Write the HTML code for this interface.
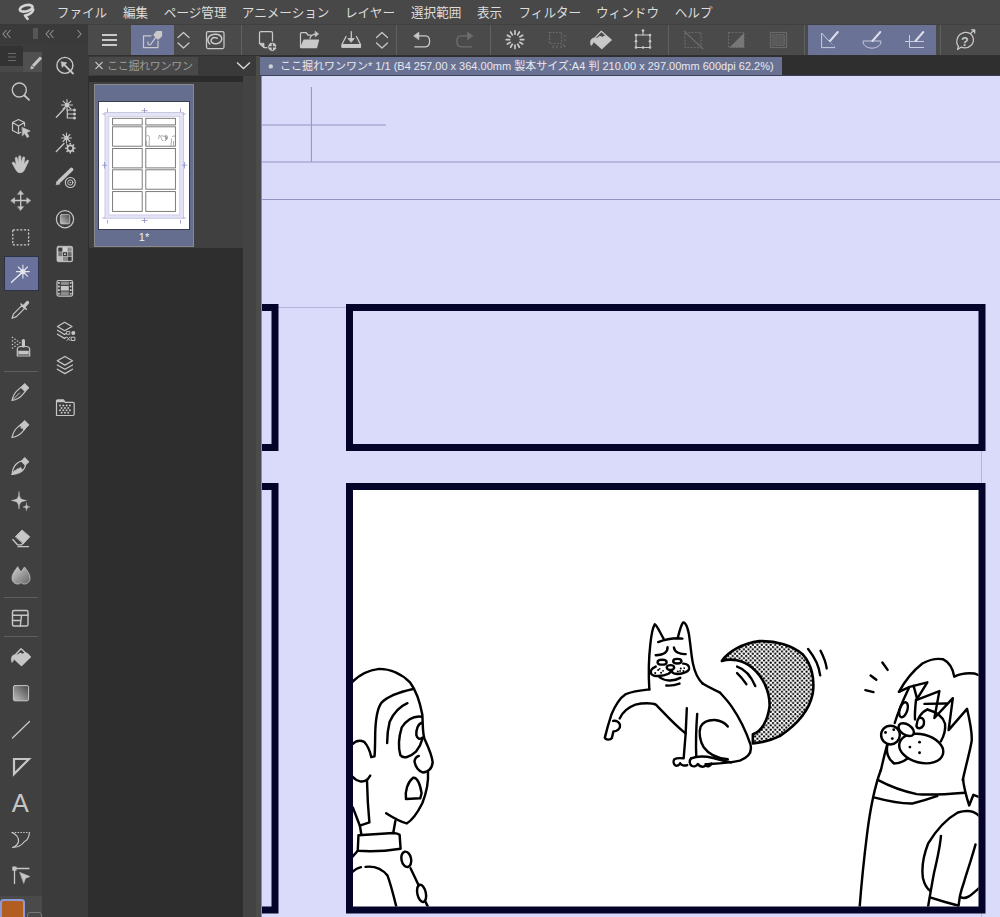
<!DOCTYPE html>
<html lang="ja">
<head>
<meta charset="utf-8">
<title>CLIP STUDIO PAINT</title>
<style>
html,body{margin:0;padding:0;}
body{width:1000px;height:917px;overflow:hidden;background:#404040;position:relative;
 font-family:"Liberation Sans","Noto Sans CJK JP",sans-serif;color:#d6d6d6;}
.abs{position:absolute;}
#menubar{left:0;top:0;width:1000px;height:24px;background:#484848;}
#menubar span{position:absolute;top:3.5px;font-size:12.6px;line-height:18px;color:#dcdcdc;white-space:nowrap;}
#tb-left{left:0;top:24px;width:88px;height:32px;background:#3a3a3a;}
#cmdbar{left:88px;top:25px;width:912px;height:30px;background:#4a4a4a;}
#cmdline{left:88px;top:24px;width:912px;height:1px;background:#333;}
#toolcol1{left:0;top:56px;width:42px;height:861px;background:#404040;}
#toolcol2{left:42px;top:44px;width:46px;height:873px;background:#3b3b3b;}
#thumbpanel{left:88px;top:56px;width:155px;height:861px;background:#2e2e2e;}
#scrollcol{left:243px;top:76px;width:13px;height:841px;background:#434343;}
#edgecol{left:256px;top:56px;width:4px;height:861px;background:#4b4b48;}
#edge2{left:260px;top:76px;width:1px;height:841px;background:#47485a;border-right:1px solid #8a8bb0;}
#edge3{left:260px;top:75px;width:740px;height:1px;background:#3c3f55;}
#canvas{left:262px;top:76px;width:738px;height:841px;background:#dadafb;overflow:hidden;}
#doctabrow{left:260px;top:56px;width:744px;height:20px;background:#2f2f2f;}
#doctab{left:260px;top:57px;width:522px;height:18px;background:#6a7293;}
#doctab span{position:absolute;left:20px;top:0;font-size:11px;line-height:18px;color:#e8e8ee;white-space:nowrap;}
.sep{top:25px;width:1px;height:30px;background:#616161;}
</style>
</head>
<body>
<div id="menubar" class="abs">
 <span style="left:56.8px">ファイル</span>
 <span style="left:123px">編集</span>
 <span style="left:163.8px">ページ管理</span>
 <span style="left:241.8px">アニメーション</span>
 <span style="left:345px">レイヤー</span>
 <span style="left:411px">選択範囲</span>
 <span style="left:477px">表示</span>
 <span style="left:518.5px">フィルター</span>
 <span style="left:596px">ウィンドウ</span>
 <span style="left:674.7px">ヘルプ</span>
</div>
<div id="tb-left" class="abs"></div>
<div id="cmdbar" class="abs"></div>
<div id="toolcol1" class="abs"></div>
<div id="toolcol2" class="abs"></div>
<div id="thumbpanel" class="abs"></div>
<div id="scrollcol" class="abs"></div>
<div id="edgecol" class="abs"></div><div id="edge2" class="abs"></div>
<div id="doctabrow" class="abs"></div>
<div id="edge3" class="abs"></div>
<div id="doctab" class="abs"><span>ここ掘れワンワン* 1/1 (B4 257.00 x 364.00mm 製本サイズ:A4 判 210.00 x 297.00mm 600dpi 62.2%)</span></div>
<!--UIBG-->
<!-- top-left toolbar bits -->
<div class="abs" style="left:33px;top:28px;width:5px;height:11px;background:#565656"></div>
<!-- command bar selected / separators -->
<div class="abs" style="left:131px;top:25px;width:43px;height:30px;background:#6a7296"></div>
<div class="abs" style="left:808px;top:25px;width:128px;height:30px;background:#6a7296"></div>
<div class="abs sep" style="left:241px"></div><div class="abs sep" style="left:396px"></div>
<div class="abs sep" style="left:490px"></div><div class="abs sep" style="left:668px"></div>
<div class="abs sep" style="left:804px"></div><div class="abs sep" style="left:940px"></div>
<div class="abs" style="left:88px;top:55px;width:912px;height:1px;background:#303030"></div>
<!-- tool palette tabs -->
<div class="abs" style="left:0;top:44px;width:42px;height:28px;background:#3c3c3c"></div>
<div class="abs" style="left:0;top:46px;width:23px;height:20px;background:#333"></div>
<div class="abs" style="left:0;top:66px;width:23px;height:6px;background:#494949"></div>
<div class="abs" style="left:23px;top:52px;width:19px;height:20px;background:#505050"></div>
<!-- selected tool -->
<div class="abs" style="left:4px;top:256px;width:33px;height:33px;background:#69719a;border:1px solid #2e3248"></div>
<div class="abs" style="left:4px;top:371px;width:34px;height:1px;background:#5e5e5e"></div>
<div class="abs" style="left:4px;top:597px;width:34px;height:1px;background:#5e5e5e"></div>
<div class="abs" style="left:4px;top:636px;width:34px;height:1px;background:#5e5e5e"></div>
<!-- color swatches -->
<div class="abs" style="left:0;top:896px;width:42px;height:21px;background:#4a4a4a"></div>
<div class="abs" style="left:27px;top:912px;width:13px;height:10px;border:1px solid #777;border-radius:3px;background:#484848"></div>
<div class="abs" style="left:0px;top:899px;width:21px;height:22px;border:2.5px solid #8d9ad6;border-radius:3.5px;background:#b25e22"></div>
<!-- thumbnail panel -->
<div class="abs" style="left:88px;top:56px;width:168px;height:20px;background:#3a3a3a"></div>
<div class="abs" style="left:89px;top:57px;width:109px;height:18px;background:#494949"></div>
<div class="abs" style="left:107px;top:57px;font-size:11px;line-height:18px;color:#9c9c9c;white-space:nowrap;letter-spacing:-0.3px">ここ掘れワンワン</div>
<div class="abs" style="left:89px;top:76px;width:154px;height:6px;background:#2b2b2b"></div>
<div class="abs" style="left:89px;top:82px;width:154px;height:166px;background:#404040"></div>
<div class="abs" style="left:94px;top:84px;width:98px;height:161px;background:#666e8f;border:1px solid #8a8a8a"></div>
<div class="abs" style="left:98px;top:101px;width:90px;height:127px;background:#fff;border:1px solid #3a3c4e"></div>
<div class="abs" style="left:95px;top:230px;width:98px;text-align:center;font-size:11px;line-height:14px;color:#f0f0f0">1*</div>
<!--/UIBG-->
<div id="canvas" class="abs">
</div>
<svg class="abs" style="left:0;top:0" width="1000" height="917" viewBox="0 0 1000 917">
<defs>
<clipPath id="cv"><rect x="262" y="76" width="738" height="841"/></clipPath>
<clipPath id="p4"><rect x="353" y="490" width="625.5" height="416.5"/></clipPath>
<pattern id="tone" width="4.47" height="4.47" patternUnits="userSpaceOnUse" patternTransform="scale(5.392) translate(0.4,0.2)">
<rect width="4.47" height="4.47" fill="#fff"/>
<circle cx="1.1" cy="1.1" r="1.12" fill="#000"/><circle cx="3.335" cy="3.335" r="1.12" fill="#000"/>
</pattern>
</defs>
<g clip-path="url(#cv)">
<!-- guide lines -->
<g stroke="#9292c3" stroke-width="1" fill="none">
<line x1="311.4" y1="87" x2="311.4" y2="162"/>
<line x1="262" y1="125" x2="386" y2="125"/>
<line x1="262" y1="162" x2="1000" y2="162"/>
<line x1="262" y1="199.5" x2="1000" y2="199.5"/>
<line x1="278" y1="307.5" x2="347" y2="307.5" stroke="#b4b4dc"/>
<line x1="981.5" y1="451" x2="981.5" y2="483" stroke="#b4b4dc"/>
<line x1="981.5" y1="913" x2="981.5" y2="917" stroke="#b4b4dc"/>
</g>
<!-- comic panels -->
<g stroke="#04042a" stroke-width="7" fill="none">
<rect x="200" y="307.5" width="75" height="140"/>
<rect x="349.5" y="307.5" width="632.5" height="140"/>
<rect x="200" y="486.5" width="75" height="423.5"/>
<rect x="349.5" y="486.5" width="632.5" height="423.5" fill="#fff"/>
</g>
<g clip-path="url(#p4)" fill="none" stroke="#000" stroke-width="1.7" stroke-linecap="round" stroke-linejoin="round">
<!--DRAWINGS-->
<!--DOGMAN-->
<!-- right character: zoom coords origin (860,650) scale 7.054 -->
<g transform="translate(860,650) scale(0.14176)" stroke-width="17.2">
<path d="M158 88 L195 140"/><path d="M75 180 L115 210"/><path d="M38 283 L95 297"/>
<path d="M275 295 C310 230 370 150 440 95 C490 68 545 58 585 65 C625 85 655 130 665 188 C700 170 760 160 810 166 L850 182"/>
<path d="M275 295 L350 260 L475 228 L403 345 L378 252"/>
<path d="M345 268 C320 320 280 400 245 515"/>
<path d="M405 350 L560 290 L525 480 L655 340 L625 565 L755 415 C775 500 792 580 788 640 C775 720 745 820 725 917"/>
<path d="M455 380 L610 378"/>
<ellipse cx="306" cy="422" rx="27" ry="55" transform="rotate(18 307 425)"/>
<path d="M395 350 C390 400 385 450 388 490"/>
<path d="M475 420 C435 435 400 485 398 535 C405 560 435 558 450 525 C458 495 440 470 415 480"/>
<path d="M475 420 C530 435 585 468 600 520 C605 570 585 620 570 645"/>
<path d="M195 665 C180 720 200 775 240 800 C280 800 310 785 335 765"/>
<ellipse cx="432" cy="695" rx="158" ry="100" transform="rotate(14 432 695)" fill="#fff"/>
<circle cx="215" cy="600" r="66" fill="#fff"/>
<ellipse cx="326" cy="562" rx="60" ry="37" transform="rotate(33 326 562)" fill="#fff"/>
<g fill="#000" stroke="none">
<circle cx="180" cy="582" r="10"/><circle cx="238" cy="562" r="10"/><circle cx="228" cy="625" r="10"/>
<circle cx="420" cy="650" r="10"/><circle cx="352" cy="685" r="10"/><circle cx="420" cy="725" r="10"/>
</g>
<!-- lower part: origin (860,770): y + 846.5 -->
<path d="M192 668 C172 740 158 800 147 850"/>
<g transform="translate(0,846.5)">
<path d="M147 0 C110 100 75 250 50 450 C25 650 8 820 -5 1000"/>
<path d="M125 70 C200 110 300 150 400 170 C500 180 600 172 740 160"/>
<path d="M105 195 C180 215 280 238 370 236 C450 218 500 200 545 184"/>
<path d="M727 62 C730 100 745 170 770 250 L800 175 L850 195"/>
<path d="M850 335 C815 290 760 278 690 300 C610 345 540 420 480 520 C445 610 432 680 444 762 C455 810 475 840 497 853"/>
<path d="M571 465 C565 540 545 630 522 727 C510 790 498 860 480 966"/>
<path d="M494 899 L600 931 L691 956"/>
<path d="M815 525 C800 580 785 625 776 656 C760 705 745 750 734 790 C720 830 710 865 705 889 L695 959"/>
<path d="M712 899 C730 905 748 903 765 893 C790 878 815 855 845 828"/>
</g>
</g>
<!--/DOGMAN-->
<!--MAN-->
<!-- old man: zoom coords origin (345,655) scale 7.05 -->
<g transform="translate(345,655) scale(0.14184)" stroke-width="17.2">
<path d="M50 192 C100 140 160 108 240 98 C320 98 400 135 460 195 C505 255 530 340 545 420 C550 480 545 540 560 590 C585 645 612 700 618 755 C615 800 585 828 548 828 C515 815 495 785 490 748 C495 725 505 715 520 712"/>
<path d="M480 240 C400 258 305 288 258 335 C228 375 216 440 213 550 C212 650 210 700 208 715 L185 720 C178 685 160 640 135 612 C105 598 75 605 50 630"/>
<path d="M440 340 C390 362 345 405 315 470 C300 530 297 580 297 620"/>
<path d="M540 435 C490 428 440 452 400 510 C380 575 375 650 390 705 C410 735 460 720 500 682 C525 650 540 615 546 590"/>
<path d="M542 478 C515 485 500 525 503 565 C510 590 528 598 545 582"/>
<!-- lower part: origin (345,765): y + 775.5 -->
<g transform="translate(0,775.5)">
<path d="M50 80 C85 120 130 128 160 100 L178 75"/>
<path d="M155 108 C157 200 162 300 172 405 L105 428 C90 390 75 350 55 300"/>
<path d="M105 428 L115 488"/>
<path d="M585 50 C590 120 572 200 545 270 C510 340 470 392 435 412 C400 402 340 372 290 340"/>
<path d="M430 240 C422 180 442 120 480 90 C510 85 530 135 540 200 L530 235 Z"/>
<path d="M355 395 L340 480"/>
<path d="M95 495 L340 480 C360 482 375 485 385 492 L392 590 C300 605 180 612 90 605 Z"/>
<path d="M90 605 L50 650"/>
<ellipse cx="432" cy="665" rx="34" ry="55" transform="rotate(-12 432 665)"/>
<path d="M462 728 L520 850"/>
<ellipse cx="540" cy="905" rx="30" ry="62" transform="rotate(-12 540 905)"/>
<path d="M565 960 L585 1000"/>
<path d="M50 755 C70 735 90 725 112 720"/>
<path d="M145 718 C200 712 260 730 300 780 C325 850 345 930 362 1000"/>
</g>
</g>
<!--/MAN-->
<!--CAT-->
<!-- dog/cat left half: zoom coords origin (590,610) scale 5.392 -->
<g transform="translate(590,610) scale(0.18546)" stroke-width="13">
<!-- tail (coords from origin 700 -> shift +593.1) -->
<g transform="translate(593.1,0)">
<path d="M118 275 C150 225 230 180 320 168 C410 165 500 190 555 240 C600 290 620 370 608 450 C590 540 520 620 430 680 C380 705 330 715 285 720 L285 670 C330 655 365 600 375 520 C378 440 340 360 280 310 C230 270 165 258 118 275 Z" fill="url(#tone)" stroke-width="14"/>
<path d="M200 305 C240 318 275 355 298 410"/>
<path d="M200 340 C222 360 240 385 250 400"/>
<path d="M583 210 C615 250 642 300 648 352"/>
<path d="M650 220 C668 255 680 290 683 315"/>
<!-- back line and rump -->
<path d="M108 446 C130 470 150 490 170 520 C215 585 250 660 272 725 C282 765 262 795 215 812 C160 825 90 828 30 832"/>
<!-- haunch -->
<path d="M150 628 C135 608 110 596 80 593 C45 592 15 605 3 630 C-8 660 0 710 20 740 C45 775 95 800 150 805"/>
</g>
<!-- head+face: zoom coords origin (640,615) scale 10.18 -->
<g transform="translate(269.6,26.96) scale(0.5297)" stroke-width="24.5">
<path d="M95 758 C85 600 88 450 105 300 C112 230 128 130 150 95 C175 110 210 190 240 240"/>
<path d="M185 275 C250 250 330 236 385 236 L432 240"/>
<path d="M385 232 C400 170 420 100 440 75 C462 70 485 130 497 190 C512 280 520 400 538 490 C552 560 575 640 640 700"/>
<path d="M280 328 C284 372 250 405 160 410"/>
<path d="M345 330 C350 375 400 402 465 398"/>
<ellipse cx="225" cy="480" rx="46" ry="25"/>
<ellipse cx="380" cy="470" rx="42" ry="23"/>
<ellipse cx="310" cy="535" rx="38" ry="25"/>
<path d="M160 525 C120 540 100 570 115 600 C140 630 230 628 290 598 C305 588 315 578 320 565"/>
<path d="M440 495 C480 495 505 520 500 548 C490 585 400 610 345 595 C330 588 322 578 320 565"/>
<path d="M200 635 C250 672 340 680 410 640"/>
<path d="M268 718 C320 722 365 712 402 698"/>
<g fill="#000" stroke="none">
<circle cx="155" cy="590" r="10.5"/><circle cx="185" cy="560" r="10.5"/><circle cx="215" cy="588" r="10.5"/><circle cx="200" cy="548" r="9"/><circle cx="235" cy="568" r="9"/>
<circle cx="385" cy="575" r="10.5"/><circle cx="415" cy="545" r="10.5"/><circle cx="442" cy="570" r="10.5"/><circle cx="408" cy="570" r="9"/><circle cx="450" cy="540" r="9"/>
</g>
</g>
<path d="M606 395 C630 411 665 428 702 446"/>
<!-- arm -->
<path d="M320 428 C280 432 230 438 190 455 C160 475 135 515 115 565 C100 610 88 655 80 688 C85 702 110 702 118 690 C122 675 124 662 126 655 C145 655 165 640 162 620 C158 603 140 594 125 598"/>
<path d="M160 585 C175 550 205 525 245 510 C285 500 335 500 355 510 C400 555 450 615 515 665"/>
<!-- front legs -->
<path d="M522 530 C520 600 515 700 505 800 C485 798 465 798 455 805 C448 815 450 830 460 838 C470 842 482 838 486 826 C492 838 510 842 524 836"/>
<path d="M578 560 C572 640 570 720 573 790"/>
<path d="M545 800 C535 812 535 830 548 840 C560 846 575 842 582 830 C590 845 610 850 625 838 C632 846 648 846 655 828"/>
<path d="M545 800 C575 788 620 788 665 798 C700 808 730 815 760 822"/>
</g>
<!--/CAT-->
</g>
</g>
</svg>

<!--ICO-->
<svg class="abs" style="left:0;top:0" width="1000" height="917" viewBox="0 0 1000 917">
<defs>
<linearGradient id="gsq" x1="1" y1="0" x2="0" y2="1"><stop offset="0" stop-color="#484848"/><stop offset="1" stop-color="#c4c4c4"/></linearGradient>
<linearGradient id="gsq2" x1="1" y1="0" x2="0" y2="1"><stop offset="0" stop-color="#454545"/><stop offset="1" stop-color="#c0c0c0"/></linearGradient>
<linearGradient id="gdrop" x1="0" y1="0" x2="1" y2="1"><stop offset="0" stop-color="#d0d0d0"/><stop offset="1" stop-color="#666"/></linearGradient>
</defs>
<!-- app logo -->
<g fill="none" stroke="#d4d4d4" stroke-width="2.7" stroke-linecap="round" stroke-linejoin="round">
<ellipse cx="26.2" cy="8.3" rx="6.5" ry="3.1" transform="rotate(-14 26.2 8.3)"/>
<path d="M33.2 9.5 C32.5 13 28.5 14.8 25 15.5 L27.5 18.8"/>
</g>
<!-- top-left chevrons -->
<g fill="none" stroke="#8e8e8e" stroke-width="1.1">
<path d="M6.5 30 L3 34 L6.5 38 M10.5 30 L7 34 L10.5 38"/>
<path d="M49.5 30 L46 34 L49.5 38 M53.5 30 L50 34 L53.5 38"/>
<path d="M77.5 30 L81 34 L77.5 38"/>
</g>
<!-- ===== command bar ===== -->
<g fill="none" stroke="#c9c9c9" stroke-width="1.25" stroke-linecap="round" stroke-linejoin="round">
<path d="M102 35 H117 M102 40 H117 M102 45 H117" stroke-width="2" stroke-linecap="butt"/>
<!-- shovel -->
<path d="M151 35.8 H143.5 V47.5 H158 V41"/>
<path d="M148 42 C147 45 151 46 151.5 43 L156 37" />
<path d="M154 35 L157 31.5 H161.5 V36 L158 39 Z" fill="#c9c9c9"/>
<!-- chevrons -->
<path d="M178 37.5 L183.5 32.5 L189 37.5 M178 43 L183.5 48 L189 43"/>
<path d="M376.5 37.5 L382 32.5 L387.5 37.5 M376.5 43 L382 48 L387.5 43"/>
<!-- clip studio -->
<rect x="206.5" y="31.5" width="17.5" height="17" rx="1.5"/>
<path d="M209.8 44 C206 40 208 35 214.4 34.2 C218 33.800 221.500 35.200 221.800 38.500 C222 42 218 44.200 215 43.800 C212 43.400 210.300 41.500 211.300 39.500 C212.300 37.600 215 37.300 217.200 38.200" stroke-width="1.500"/>
<!-- new doc -->
<path d="M268 47.5 H264 L259.5 43.5 V33 C259.5 32 260.2 31.5 261 31.5 H271 C272 31.5 272.5 32 272.5 33 V41"/>
<path d="M259.8 43.3 H264 V47.3 Z" fill="#c9c9c9" stroke-width="0.8"/>
<circle cx="272.3" cy="46.8" r="4.6" fill="#c9c9c9" stroke="#4a4a4a" stroke-width="1"/>
<path d="M269.6 46.8 H275 M272.3 44.1 V49.5" stroke="#4a4a4a" stroke-width="1.2"/>
<!-- open folder -->
<path d="M300.5 47 V33.5 C300.5 33 301 32.5 301.5 32.5 H306 L308 35 H311"/>
<path d="M300.8 47.5 L304 40 H318.5 L316.5 47.5 Z" fill="#c9c9c9"/>
<path d="M310 38.5 C310.5 35.5 313 34 316.5 34" />
<path d="M315.5 31.5 L318.5 34 L315.5 36.5 Z" fill="#c9c9c9" stroke-width="0.8"/>
<!-- save tray -->
<path d="M346 36.5 L342 44.5 V47 H360.5 V44.5 L356.5 36.5"/>
<path d="M342.3 44.5 H360.3 V47.2 H342.3 Z" fill="#c9c9c9"/>
<path d="M351.3 31.5 V40"/>
<path d="M348.3 38.5 H354.3 L351.3 42 Z" fill="#c9c9c9" stroke-width="0.8"/>
<!-- undo -->
<path d="M418 35.8 H425.5 C431 36 431 46.5 425.5 46.8 H414.8"/>
<path d="M414 35.8 L418.8 32.3 V39.3 Z" fill="#c9c9c9" stroke-width="0.8"/>
<!-- bucket -->
<path d="M593 40 L601.3 31.3 L611 40"/>
<path d="M594.5 38.5 L598 38 L600 36.5 L602.5 37.5 L605 36 L607.5 37 L611 40 L601.8 48.6 L594.5 42 Z" fill="#c9c9c9"/>
<path d="M593.5 38 C590 39 590 43 591.2 45.5 C593 44 593.8 41.5 594.5 40 Z" fill="#c9c9c9" stroke-width="0.6"/>
<!-- transform -->
<rect x="636" y="35" width="14" height="12.5" stroke-width="1.1"/>
<path d="M643 35 V30.5" stroke-width="1.1"/>
<g fill="#c9c9c9" stroke="none"><circle cx="643" cy="30.6" r="1.3"/><circle cx="636" cy="35" r="1.3"/><circle cx="650" cy="35" r="1.3"/><circle cx="636" cy="47.5" r="1.3"/><circle cx="650" cy="47.5" r="1.3"/><circle cx="636" cy="41.2" r="1.3"/><circle cx="650" cy="41.2" r="1.3"/><circle cx="643" cy="47.5" r="1.3"/></g>
<!-- rulers on selected bg -->
<g stroke="#c9cde0" stroke-width="1" stroke-linecap="butt">
<path d="M821.6 33 V47.6 H835 M821.6 33 L829.500 41.500"/>
<path d="M829.500 41.500 L835 47" stroke-dasharray="1 1.200" stroke-width="0.800"/>
<path d="M863 41 H881 C881 50.500 863 50.500 863 41 Z"/>
<path d="M905 41.500 H924 M909.500 35 V47.500 H924"/>
<g stroke="#dcdfea" stroke-width="2" stroke-linecap="round">
<path d="M830 41 L837.800 32"/><path d="M872.500 41 L880.300 32"/><path d="M915.500 41 L923.300 32"/>
</g>
</g>
<!-- help -->
<path d="M958.5 46.5 C955 42 957 33.5 965 32.3 C973 32 975.5 40 971.5 45 C968.5 48 964 48.3 961 47.2 L957.5 49.5 Z"/>
<path d="M970.5 33.5 L974.5 30 M971.5 29.8 H974.7 V33"/>
</g>
<text x="961" y="45.5" font-family="Liberation Sans, sans-serif" font-weight="bold" font-size="12.5" fill="#c9c9c9">?</text>
<!-- dim command icons -->
<g fill="none" stroke="#6f6f6f" stroke-width="1.25" stroke-linecap="round" stroke-linejoin="round">
<path d="M467.5 35.8 H461 C455.500 36 455.500 46.500 461 46.800 H471.500"/>
<path d="M472.5 35.8 L467.7 32.300 V39.300 Z" fill="#6f6f6f" stroke-width="0.8"/>
</g>
<g fill="none" stroke="#6a6a6a" stroke-width="1.2">
<rect x="549.5" y="32.5" width="12" height="11" stroke-dasharray="2 1.2"/>
<path d="M553 45.500 V48 M557 45.500 V48.500 M561 45.500 V48 M563.5 36 H566 M563.5 40 H566.500 M563 44.500 L565.500 47" stroke-dasharray="none"/>
<rect x="685" y="32.5" width="16" height="15" stroke-dasharray="2 1.3"/>
<path d="M684 31 L703 49" stroke-width="1.4"/>
<rect x="728.5" y="32.5" width="15.5" height="15" stroke-dasharray="2 1.3"/>
<path d="M744 33 V47.500 H729.500 Z" fill="#777" stroke="none"/>
<rect x="770.5" y="32.5" width="16" height="15" />
<rect x="772.5" y="34.5" width="12" height="11" fill="#5a5a5a" stroke-dasharray="2 1.3"/>
</g>
<!-- spinner -->
<g stroke="#c9c9c9" stroke-width="1.7" stroke-linecap="round">
<path id="tk" d="M515 30.8 V34.2"/>
<use href="#tk" transform="rotate(30 515 39.6)"/><use href="#tk" transform="rotate(60 515 39.6)"/><use href="#tk" transform="rotate(90 515 39.6)"/><use href="#tk" transform="rotate(120 515 39.6)"/><use href="#tk" transform="rotate(150 515 39.6)"/><use href="#tk" transform="rotate(180 515 39.6)"/><use href="#tk" transform="rotate(210 515 39.6)"/><use href="#tk" transform="rotate(240 515 39.6)"/><use href="#tk" transform="rotate(270 515 39.6)"/><use href="#tk" transform="rotate(300 515 39.6)"/><use href="#tk" transform="rotate(330 515 39.6)"/>
</g>
<!-- thumbnail tab x / chevron / doc tab dot -->
<path d="M95.500 62 L102.500 69 M102.500 62 L95.500 69" stroke="#bdbdbd" stroke-width="1.2" fill="none"/>
<path d="M237 62.5 L243.500 68.500 L250 62.500" stroke="#d6d6d6" stroke-width="1.4" fill="none"/>
<circle cx="270.8" cy="66.4" r="2.2" fill="#cfcfd8"/>
<!--TOOLICONS-->
<g fill="none" stroke="#c6c6c6" stroke-width="1.4" stroke-linecap="round" stroke-linejoin="round">
<!-- tab icons -->
<path d="M8.5 53.5 H15.5 M8.5 57 H15.5 M8.5 60.5 H15.5" stroke="#6c6c6c" stroke-width="1.2"/>
<path d="M33 66 L41 57.500" stroke-width="3" stroke-linecap="butt"/>
<path d="M30.8 68.6 L31.5 66 L33.500 67.800 Z" fill="#c6c6c6" stroke-width="0.8"/>
<!-- magnifier -->
<circle cx="19.3" cy="90" r="7"/><path d="M24.500 95.500 L29 99.800" stroke-width="1.8"/>
<!-- cube + cursor -->
<path d="M12.500 122.500 L18.500 119.500 L24.500 122.500 V126 M12.500 122.500 V130.500 L18.500 133.500 V126 L12.500 122.500 M18.500 126 L24.500 122.500 M18.5 133.500 L20.500 132.500" stroke-width="1.2"/>
<path d="M22.300 127.500 L30.200 131 L26.800 132.500 L29 136.500 L27 137.500 L24.800 133.500 L22.500 135.800 Z" fill="#c6c6c6" stroke-width="0.6"/>
<!-- hand -->
<path d="M15 168 L12.300 163.500 C12 162 13.500 161.500 14.500 162.800 L16.300 165 L15.300 158.500 C15.200 157 16.900 156.800 17.300 158.200 L18.600 163 L18.800 156.700 C18.900 155.300 20.700 155.300 20.800 156.700 L21.200 163 L22.800 157.600 C23.300 156.300 24.900 156.800 24.700 158.200 L23.800 164 L26.800 160.500 C27.800 159.500 29 160.500 28.300 161.700 L25.300 168 C24 171.500 22.500 172.700 20 172.700 C17.500 172.700 16.200 171 15 168 Z" fill="#c6c6c6" stroke-width="0.7"/>
<!-- move -->
<path d="M20.700 192.500 V208.500 M12.700 200.500 H28.700" stroke-width="1.3"/>
<path d="M20.700 190.700 L23.500 194.300 H17.900 Z M20.700 210.300 L23.500 206.700 H17.900 Z M11 200.500 L14.600 197.700 V203.300 Z M30.400 200.500 L26.800 197.700 V203.300 Z" fill="#c6c6c6" stroke-width="0.6"/>
<!-- dashed rect -->
<rect x="12.800" y="229.800" width="15.800" height="15" stroke-dasharray="2.2 1.5" stroke-linecap="butt" stroke-width="1.3"/>
<!-- wand (selected) -->
<g stroke="#e4e6ee">
<path d="M11.500 282.200 L21.500 273" stroke-width="1.4"/>
<path d="M22.900 265 V278 M16.400 271.600 H29.400 M18.300 267 L27.500 276.200 M27.500 267 L18.300 276.200" stroke-width="1.1"/>
<circle cx="22.900" cy="271.600" r="2.600" fill="#e4e6ee" stroke="none"/>
</g>
<!-- eyedropper -->
<path d="M12 318.200 L13.600 313.800 L22 305.400 L24.800 308.200 L16.400 316.600 Z" stroke-width="1.2"/>
<path d="M21 304 L26.300 309.300" stroke-width="1.600"/>
<path d="M24 306.400 L27.500 302.600" stroke-width="3.400"/>
<!-- spray -->
<path d="M17.300 356 V349.500 C17.300 347.500 19 346.500 21 346.500 H25.800 C28 346.500 29.700 347.500 29.700 349.500 V356 Z" stroke-width="1.200"/>
<path d="M18.500 351 H28.500 V354.200 H18.500 Z" fill="#c6c6c6" stroke-width="0.500"/>
<path d="M23.400 346 V340.500" stroke-width="3.200"/>
<g fill="#c6c6c6" stroke="none"><circle cx="12.500" cy="337.500" r="0.800"/><circle cx="12.500" cy="341" r="0.800"/><circle cx="12.500" cy="344.500" r="0.800"/><circle cx="12.500" cy="348" r="0.800"/><circle cx="15" cy="339.200" r="0.800"/><circle cx="15" cy="342.700" r="0.800"/><circle cx="15" cy="346.200" r="0.800"/><circle cx="17.500" cy="341" r="0.800"/><circle cx="17.500" cy="344.500" r="0.800"/><circle cx="19.800" cy="342.700" r="0.800"/></g>
<!-- G pen -->
<path d="M12 400.500 C13 396 15 392.500 17.450 390.400 L21.200 387.100 L25.400 391.300 L22.100 395.050 C20 397.500 16.500 399.500 12 400.500 Z" stroke-width="1.200"/>
<path d="M12.500 400 L19.500 393" stroke-width="1"/>
<path d="M21.200 387.100 L24.700 383.500 L29 387.800 L25.400 391.300 Z" fill="#c6c6c6" stroke-width="0.900"/>
<!-- pencil nib -->
<g transform="translate(0,37)">
<path d="M12 400.500 C13 396 15 392.500 17.450 390.400 L21.200 387.100 L25.400 391.300 L22.100 395.050 C20 397.500 16.500 399.500 12 400.500 Z" stroke-width="1.200"/>
<path d="M19 389 L24.700 383.500 L29 387.800 L23.800 393.300 L22.800 390.800 L21 391.300 L21.300 389 Z" fill="#c6c6c6" stroke-width="0.900"/>
</g>
<!-- brush -->
<g transform="translate(0,74)">
<path d="M12 400.500 C12.500 395.500 14.500 390.500 18.500 388.200 L21.500 387 L25.500 391 L24.500 394 C22.500 398 17 400 12 400.500 Z" stroke-width="1.200"/>
<path d="M12 400.500 C13 397.500 15 395.500 16 396.500 C16.500 395 18 394 18.800 395 C19.500 393.500 21 393 21.500 394.500 L22.500 396 C20 398.500 16 400 12 400.500 Z" fill="#c6c6c6" stroke-width="0.500"/>
<path d="M21.500 387 L24.700 383.500 L29 387.800 L25.500 391 Z" fill="#c6c6c6" stroke-width="0.900"/>
</g>
<!-- sparkle -->
<path d="M19 492 C19.400 498 20 499.500 26.500 500.500 C20 501.500 19.400 503 19 509 C18.600 503 18 501.500 11.500 500.500 C18 499.500 18.600 498 19 492 Z" fill="#c6c6c6" stroke-width="0.500"/>
<path d="M26.500 503 C26.700 506 27.200 506.500 30 507 C27.200 507.500 26.700 508 26.500 511 C26.300 508 25.800 507.500 23 507 C25.800 506.500 26.300 506 26.500 503 Z" fill="#c6c6c6" stroke-width="0.400"/>
<!-- eraser -->
<path d="M12.800 539.500 L17.500 544.800 L21.500 544.800 L25 541" stroke-width="1.300"/>
<path d="M15.500 536.500 L22 530 L29.800 536.800 L23.500 543.500 Z" fill="#c6c6c6" stroke-width="0.800"/>
<path d="M18 546.700 H28.500" stroke-width="1.200"/>
<!-- blend -->
<path d="M17.500 567 C14.500 571 12 574.500 12 578 C12 582 15 584 17.800 584 C19.500 584 20.500 583.300 21 582.500 C21.500 583.300 22.800 584 24.300 584 C27.300 584 30 582 30 578 C30 574.500 27.500 571 24.500 567 L21 572 Z" fill="url(#gdrop)" stroke-width="0.800"/>
<!-- frame -->
<rect x="12.500" y="610.500" width="15.500" height="15.500" rx="1.500"/>
<path d="M12.500 615.300 H28 M12.500 620.500 H20.500 M21.500 615.300 L20.300 626"/>
<!-- bucket -->
<path d="M12.800 657.500 L21 648.800 L30 657"/>
<path d="M14.500 655.500 L18 655 L20 653.500 L22.500 654.500 L25 653 L27.500 654 L30.200 657 L21.500 665.500 L14.500 659 Z" fill="#c6c6c6"/>
<path d="M13.500 655 C11 656 11 660 12 662.500 C13.500 661 14 658.500 14.500 657 Z" fill="#c6c6c6" stroke-width="0.600"/>
<!-- gradient -->
<rect x="13.400" y="685.600" width="15.200" height="15.200" rx="1.500" fill="url(#gsq2)" stroke-width="1"/>
<!-- line -->
<path d="M12.500 738 L29.500 721.500" stroke-width="1.300"/>
<!-- triangle -->
<path d="M14 759 H29 L14 774 Z" stroke-width="2.200" stroke-linejoin="miter"/>
<!-- balloon -->
<path d="M12 832.500 C15.500 834 19 837 18.500 842 C17.500 845 15 846.500 12.500 847.500 C18 847.500 22 845 24.500 841.500 C27 840.500 29 837 29.500 832.500" stroke-width="1.200"/>
<path d="M12 832.500 H29.500" stroke-dasharray="1.500 1.300" stroke-width="1.200" stroke-linecap="butt"/>
<!-- object cursor -->
<path d="M14.500 868.500 H29 M14.500 868.500 V883.500" stroke-width="1.300"/>
<rect x="12.300" y="866.500" width="4.200" height="4.200" fill="#c6c6c6" stroke="none"/>
<path d="M20 872.500 L29.800 876.500 L25.500 878.300 L23.800 883 Z" fill="#c6c6c6" stroke-width="0.600"/>
<!-- ===== column 2 ===== -->
<circle cx="64.900" cy="65.400" r="8"/>
<path d="M73 73.500 L63.500 64" stroke-width="1.800"/>
<path d="M61.300 61.800 L66.800 62.800 L62.300 67.300 Z" fill="#c6c6c6" stroke-width="0.600"/>
<!-- wand + list -->
<path d="M56.300 117.300 L65 108" stroke-width="1.300"/>
<path d="M67 99.500 V110.500 M61.500 105 H72.500 M63.100 101.100 L70.900 108.900 M70.900 101.100 L63.100 108.900" stroke-width="1.100"/>
<circle cx="67" cy="105" r="2.200" fill="#c6c6c6" stroke="none"/>
<path d="M67.300 110 V118 M67.300 110 H74 M67.300 114 H74 M67.300 118 H74" stroke-width="1.200"/>
<g fill="#c6c6c6" stroke="none"><circle cx="74.500" cy="110" r="1.500"/><circle cx="74.500" cy="114" r="1.500"/><circle cx="74.500" cy="118" r="1.500"/></g>
<!-- wand + gear -->
<path d="M56.300 151.500 L64 143.500" stroke-width="1.300"/>
<path d="M66.500 133 V143 M61.500 138 H71.500 M63 134.500 L70 141.500 M70 134.500 L63 141.500" stroke-width="1.100"/>
<circle cx="66.500" cy="138" r="2.200" fill="#c6c6c6" stroke="none"/>
<circle cx="70.300" cy="148.200" r="2.900" stroke-width="1.700"/>
<path d="M70.300 143 V144.500 M70.300 152 V153.500 M65.100 148.200 H66.600 M74 148.200 H75.500 M66.600 144.500 L67.700 145.600 M72.900 150.800 L74 151.900 M74 144.500 L72.900 145.600 M67.700 150.800 L66.600 151.900" stroke-width="1.500" stroke-linecap="butt"/>
<!-- pencil + target -->
<path d="M59.500 181 L71.500 169.500" stroke-width="3.800"/>
<path d="M56.200 184.500 L57 181 L59.800 183.700 Z" fill="#c6c6c6" stroke-width="0.700"/>
<circle cx="70.300" cy="182.500" r="5" fill="#3b3b3b" stroke-width="1.100"/>
<circle cx="70.300" cy="182.500" r="2.600" stroke-width="1"/>
<circle cx="70.300" cy="182.500" r="0.800" fill="#c6c6c6" stroke="none"/>
<!-- circle + gradient square -->
<circle cx="65" cy="219.200" r="8.600" stroke-width="1.200"/>
<rect x="60.400" y="214.600" width="9.300" height="9.300" rx="1.200" fill="url(#gsq)" stroke-width="0.800"/>
<!-- checker -->
<rect x="57" y="246.300" width="15.600" height="15.400" rx="1.500" fill="#c6c6c6" stroke-width="0.800"/>
<g stroke="none"><rect x="58.300" y="247.600" width="4" height="4" fill="#3a3a3a"/><rect x="63" y="247.600" width="4" height="4" fill="#cfcfcf"/><rect x="67.600" y="247.600" width="4" height="4" fill="#8a8a8a"/>
<rect x="58.300" y="252.200" width="4" height="4" fill="#777"/><rect x="63" y="252.200" width="4" height="4" fill="#3a3a3a"/><rect x="64.200" y="253.400" width="1.600" height="1.600" fill="#ddd"/><rect x="67.600" y="252.200" width="4" height="4" fill="#6a6a6a"/>
<rect x="58.300" y="256.800" width="4" height="4" fill="#bdbdbd"/><rect x="63" y="256.800" width="4" height="4" fill="#888"/><rect x="67.600" y="256.800" width="4" height="4" fill="#3a3a3a"/></g>
<!-- film -->
<rect x="57" y="280.500" width="15.600" height="15.600" rx="1.500" stroke-width="1.200"/>
<g stroke="none"><rect x="60.800" y="281.500" width="8" height="3.600" fill="#8c8c8c"/><rect x="60.800" y="286" width="8" height="4.600" fill="#c6c6c6"/><rect x="60.800" y="291.500" width="8" height="3.600" fill="#8c8c8c"/>
<g fill="#c6c6c6"><rect x="58" y="282" width="1.800" height="1.800"/><rect x="58" y="285.600" width="1.800" height="1.800"/><rect x="58" y="289.200" width="1.800" height="1.800"/><rect x="58" y="292.800" width="1.800" height="1.800"/><rect x="69.800" y="282" width="1.800" height="1.800"/><rect x="69.800" y="285.600" width="1.800" height="1.800"/><rect x="69.800" y="289.200" width="1.800" height="1.800"/><rect x="69.800" y="292.800" width="1.800" height="1.800"/></g></g>
<!-- layers + shapes -->
<path d="M57.500 326.500 L64.500 322.300 L72 326.500 L64.500 330.700 Z M57.500 330.300 L64.500 334.500 L66.500 333.300 M57.500 334.200 L64.500 338.400 L66 337.500" stroke-width="1.300"/>
<rect x="67" y="331.500" width="2.800" height="2.800" stroke-width="0.900"/><circle cx="73.300" cy="333" r="2" fill="#c6c6c6" stroke="none"/>
<path d="M67 337 L70 340.500 M70 337 L67 340.500" stroke-width="0.900"/><rect x="71.600" y="337.200" width="3.300" height="3.300" stroke-width="1"/>
<!-- layers -->
<path d="M57.300 360.800 L64.900 356.500 L72.500 360.800 L64.900 365.100 Z M57.300 365 L64.900 369.300 L72.500 365 M57.300 369.200 L64.900 373.600 L72.500 369.200" stroke-width="1.300"/>
<!-- folder pattern -->
<path d="M56.500 415.300 V401 C56.500 400.300 57 399.800 57.700 399.800 H63.500 L65 402.300 H73 C73.700 402.300 74.200 402.800 74.200 403.500 V414.300 C74.200 415 73.700 415.500 73 415.500 H57.700 C57 415.500 56.500 415 56.500 415.300 Z" stroke-width="1.200"/>
<path d="M56.500 400 H63.500 L65 402.300 H56.500 Z" fill="#c6c6c6" stroke="none"/>
<g fill="#c6c6c6" stroke="none"><circle cx="60" cy="405.500" r="1"/><circle cx="63.300" cy="405.500" r="1"/><circle cx="66.600" cy="405.500" r="1"/><circle cx="69.900" cy="405.500" r="1"/><circle cx="61.650" cy="407.900" r="1"/><circle cx="64.950" cy="407.900" r="1"/><circle cx="68.250" cy="407.900" r="1"/><circle cx="60" cy="410.300" r="1"/><circle cx="63.300" cy="410.300" r="1"/><circle cx="66.600" cy="410.300" r="1"/><circle cx="69.900" cy="410.300" r="1"/><circle cx="61.650" cy="412.700" r="1"/><circle cx="64.950" cy="412.700" r="1"/><circle cx="68.250" cy="412.700" r="1"/></g>
</g>
<text x="11.800" y="812" font-family="Liberation Sans, sans-serif" font-size="25.500" fill="#c6c6c6">A</text>
<!--/TOOLICONS-->
<!--THUMB-->
<g fill="none">
<!-- bleed frame -->
<rect x="107" y="114.500" width="74.500" height="102" stroke="#e4e4f5" stroke-width="3.600"/>
<rect x="105" y="112.600" width="78.300" height="105.600" stroke="#b4b4da" stroke-width="0.700"/>
<rect x="108.900" y="116.300" width="70.900" height="98.700" stroke="#bcbcde" stroke-width="0.600"/>
<g stroke="#8f8fc6" stroke-width="0.800">
<path d="M144.500 108 V113 M141.500 110.700 H147.500 M144.500 218 V223 M141.500 220.500 H147.500 M102 165.200 H107 M104.500 162 V168.500 M182 165.200 H187 M184.500 162 V168.500"/>
<path d="M107.500 108.500 V112 M102.500 114 H105 M180.500 108.500 V112 M183 114 H185.500 M107.500 220 V223.500 M102.500 218 H105 M180.500 220 V223.500 M183 218 H185.500"/>
</g>
<!-- panels -->
<g stroke="#6e6e6e" stroke-width="0.900" fill="#fff">
<rect x="112.600" y="118.300" width="29.600" height="6.600"/><rect x="145.800" y="118.300" width="29.600" height="6.600"/>
<rect x="112.600" y="126.800" width="29.600" height="19.400"/><rect x="145.800" y="126.800" width="29.600" height="19.400"/>
<rect x="112.600" y="148.500" width="29.600" height="19.400"/><rect x="145.800" y="148.500" width="29.600" height="19.400"/>
<rect x="112.600" y="169.800" width="29.600" height="19.400"/><rect x="145.800" y="169.800" width="29.600" height="19.400"/>
<rect x="112.600" y="191.600" width="29.600" height="19.800"/><rect x="145.800" y="191.600" width="29.600" height="19.800"/>
</g>
<path d="M112.600 126 H142.200 M145.800 126 H175.400" stroke="#b0b0b0" stroke-width="0.800"/>
<!-- tiny drawings -->
<g stroke="#8a8a8a" stroke-width="0.700">
<path d="M146.500 136 C148 134.500 149.500 136 149.500 138.500 C149.500 141 148.500 143 149.500 145.800 M146.300 141 L146.300 145.800"/>
<path d="M158.500 139 L159.500 135 L160.500 136.500 C161.500 135.500 163 135.500 164 136.500 C165.500 134.500 168 135 167.500 138 C167 139.500 166 140.500 164.500 141"/>
<path d="M161 137 L162 140.500 L163.500 140.500" stroke-width="0.600"/>
<path d="M172 137 C173 135.500 175 135.500 175.300 137 M171.500 138.500 L171 145.800 M173.500 141 L173.500 145.800"/>
</g>
<path d="M164 136.500 C166 135 168 136.500 167 139 C166.500 140 165.500 140.500 164.800 140.600 C165.800 139 165.500 137.500 164 136.500 Z" fill="#9a9a9a" stroke="none"/>
</g>
<!--/THUMB-->
</svg>
<!--/ICO-->
</body>
</html>
